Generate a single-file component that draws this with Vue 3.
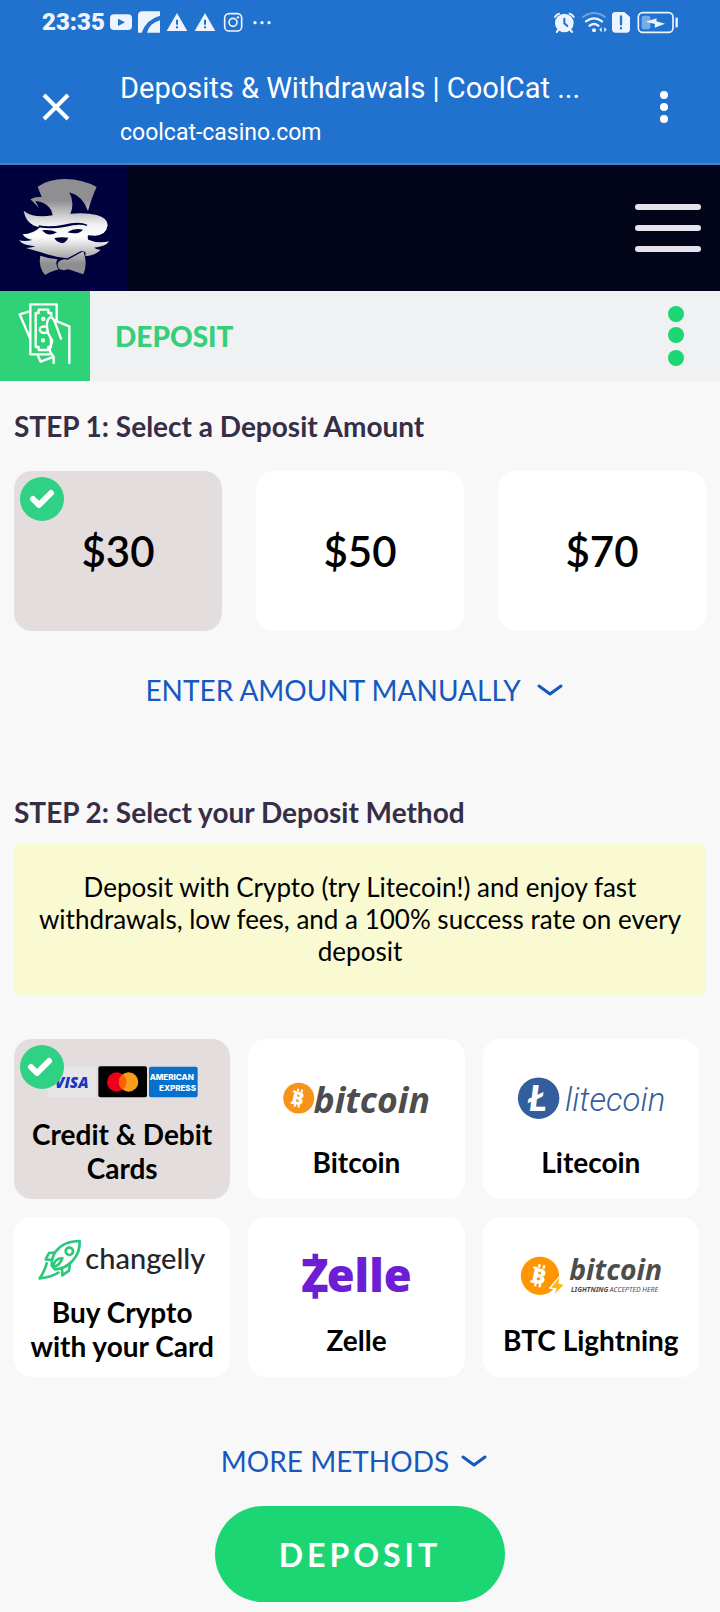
<script setup>
import { ref } from 'vue'

const amounts = [30, 50, 70]
const amount = ref(30)

const methods = [
  { id: 'cards', label: 'Credit & Debit Cards' },
  { id: 'bitcoin', label: 'Bitcoin' },
  { id: 'litecoin', label: 'Litecoin' },
  { id: 'changelly', label: 'Buy Crypto with your Card' },
  { id: 'zelle', label: 'Zelle' },
  { id: 'lightning', label: 'BTC Lightning' },
]
const method = ref('cards')
</script>

<template>
  <div class="page">
    <header class="browser">
      <div class="status">
        <div class="status-side">
          <span class="clock">23:35</span>
          <svg class="status-left" viewBox="330 30 492 72" aria-hidden="true">
            <rect x="333" y="43" width="66" height="47" rx="12" fill="#eef4fd" />
            <path d="M357 56 L378 67 L357 78Z" fill="#2171ce" />
            <path d="M417 98 V46 Q417 34 430 34 H483 V47 Q442 58 428 98Z M483 61 V98 H444 Q451 70 483 61Z" fill="#eef4fd" />
            <g fill="#eef4fd">
              <path d="M534 39 L565 93 H503Z" />
              <path d="M618 39 L649 93 H587Z" />
            </g>
            <g fill="#2171ce">
              <path d="M531 59h6v15h-6zM531 79h6v6h-6zM615 59h6v15h-6zM615 79h6v6h-6z" />
            </g>
            <rect x="677" y="41" width="51" height="52" rx="13" fill="none" stroke="#eef4fd" stroke-width="5" />
            <circle cx="702" cy="67" r="12" fill="none" stroke="#eef4fd" stroke-width="5" />
            <circle cx="717" cy="52" r="3.5" fill="#eef4fd" />
            <g fill="#eef4fd">
              <circle cx="768" cy="68" r="5" /><circle cx="789" cy="68" r="5" /><circle cx="810" cy="68" r="5" />
            </g>
          </svg>
        </div>
        <svg class="status-right" viewBox="582 30 378 72" aria-hidden="true">
          <g stroke="#eef4fd" fill="none" stroke-linecap="round">
            <circle cx="616" cy="69" r="28" fill="#eef4fd" stroke="none" />
            <path d="M588 51 Q591 43 600 41 M632 41 Q641 43 644 51" stroke-width="6" />
            <path d="M598 90 L593 96 M634 90 L639 96" stroke-width="6" />
            <path d="M616 56 V70 L625 78" stroke="#2171ce" stroke-width="6" />
            <path d="M672 51 Q705 27 738 51" stroke="#6ba2e2" stroke-width="6" />
            <path d="M681 64 Q705 46 729 64" stroke-width="7" />
            <path d="M692 77 Q705 67 718 77" stroke-width="7" />
            <circle cx="705" cy="91" r="6" fill="#eef4fd" stroke="none" />
            <path d="M728 81 V97 L721 89Z M736 81 V97 L743 89Z" fill="#eef4fd" stroke="none" />
            <path d="M769 36 H796 L813 51 V87 Q813 98 802 98 H770 Q759 98 759 87 V46 Q759 36 769 36Z" fill="#eef4fd" stroke="none" />
            <path d="M786 49 V73 M786 84 V85" stroke="#2171ce" stroke-width="7" />
            <rect x="838" y="38" width="104" height="59" rx="13" stroke-width="5" />
            <rect x="848" y="47" width="26" height="41" rx="6" fill="#79abe6" stroke="none" />
            <path d="M860 65 L893 55 L892 64 L918 71 L887 83 L888 72Z" fill="#eef4fd" stroke="none" />
            <path d="M953 53 V82" stroke-width="7" stroke-linecap="butt" />
          </g>
        </svg>
      </div>
      <div class="toolbar">
        <button class="icon-btn close" type="button" aria-label="Close">
          <svg width="28" height="28" viewBox="0 0 28 28"><path d="M2 2 L26 26 M26 2 L2 26" stroke="#fff" stroke-width="4" fill="none" /></svg>
        </button>
        <div class="titles">
          <div class="title">Deposits &amp; Withdrawals | CoolCat ...</div>
          <div class="host">coolcat-casino.com</div>
        </div>
        <button class="icon-btn more" type="button" aria-label="More options">
          <svg width="8" height="32" viewBox="0 0 8 32" fill="#fff"><circle cx="4" cy="4" r="4" /><circle cx="4" cy="16" r="4" /><circle cx="4" cy="28" r="4" /></svg>
        </button>
      </div>
    </header>

    <nav class="site-nav">
      <a class="brand" href="#" aria-label="CoolCat Casino">
        <svg width="128" height="126" viewBox="0 15 384 378">
          <defs>
            <linearGradient id="silver" gradientUnits="userSpaceOnUse" x1="0" y1="57" x2="0" y2="345">
              <stop offset="0" stop-color="#8f8f91" />
              <stop offset=".22" stop-color="#8f8f91" />
              <stop offset=".48" stop-color="#f2f2f4" />
              <stop offset=".6" stop-color="#ffffff" />
              <stop offset=".88" stop-color="#8f8f91" />
              <stop offset="1" stop-color="#8f8f91" />
            </linearGradient>
          </defs>
          <g fill="url(#silver)">
            <path d="M113 80 Q145 57 195 57 Q250 58 290 81 Q276 110 264 153 Q248 108 208 97 Q225 130 211 161 Q260 157 290 165 Q322 173 323 196 Q319 225 286 227 L264 226 Q262 234 265 239 Q295 252 327 244 Q318 260 282 263 Q290 269 302 269 Q285 287 256 289 L257 278 Q250 268 236 277 L202 295 Q165 292 120 276 L78 264 Q94 264 106 259 Q70 257 57 241 Q75 246 97 240 Q74 235 68 223 Q100 222 120 202 Q78 194 71 152 Q98 175 158 166 Q152 128 106 123 L117 144 Q106 132 91 118 Q106 109 125 111Z" />
            <path d="M121 287 Q147 296 172 298 Q164 314 176 328 Q156 333 135 345 Q114 319 121 287Z" />
            <path d="M175 306 Q187 294 203 299 L250 274 Q264 312 250 343 L205 328 Q190 333 179 328 Q169 318 175 306Z" />
          </g>
          <g fill="#00023e">
            <path d="M116 196 Q150 203 190 194 Q239 182 262 194 L260 198 Q239 190 198 200 Q155 209 116 202Z" />
            <path d="M126 211 Q150 208 171 217 Q145 233 126 211Z M202 217 Q223 203 249 209 Q235 226 202 217Z M163 234 Q183 230 205 233 Q200 245 187 250 Q170 247 163 234Z" />
          </g>
        </svg>
      </a>
      <button class="icon-btn burger" type="button" aria-label="Menu"><i></i><i></i><i></i></button>
    </nav>

    <div class="section-bar">
      <div class="section-icon">
        <svg width="90" height="90" viewBox="0 393 270 270" fill="none" stroke="#fff" stroke-width="7" stroke-linejoin="round" stroke-linecap="round" aria-hidden="true">
          <path d="M170 480 V433 H91 V583 H149" />
          <path d="M89 454 L59 463 L90 535 M114 587 L122 605 L156 592" />
          <path d="M154 469 V459 H145 V449 H116 V459 H107 V561 H116 V570 H145 V561 H153 V536" />
          <circle cx="130" cy="477" r="4" stroke-width="5" /><circle cx="129" cy="541" r="4" stroke-width="5" />
          <path d="M139 500 Q120 497 119 510 Q122 522 142 517" />
          <path d="M144 519 L157 543 L150 562 V575 L161 591 V609" />
          <path d="M144 519 Q135 481 151 472 Q158 471 163 482 L183 536 M164 481 L208 499 V609" />
        </svg>
      </div>
      <h1>DEPOSIT</h1>
      <button class="icon-btn dots" type="button" aria-label="Cashier menu">
        <svg width="16" height="60" viewBox="0 0 16 60" fill="#1bd672"><circle cx="8" cy="8" r="8" /><circle cx="8" cy="29" r="8" /><circle cx="8" cy="52" r="8" /></svg>
      </button>
    </div>

    <main>
      <h2 id="step-amount">STEP 1: Select a Deposit Amount</h2>
      <div class="amounts" role="radiogroup" aria-labelledby="step-amount">
        <label v-for="a in amounts" :key="a" class="card amount" :class="{ selected: amount === a }">
          <input v-model="amount" type="radio" name="amount" :value="a" />
          <svg v-if="amount === a" class="badge" viewBox="0 0 44 44" aria-hidden="true">
            <circle cx="22" cy="22" r="22" fill="#2fd285" /><path d="M13 22 L19 28 L31 16" fill="none" stroke="#fff" stroke-width="6" stroke-linecap="round" stroke-linejoin="round" />
          </svg>
          <span>${{ a }}</span>
        </label>
      </div>
      <button class="expand manual" type="button">
        ENTER AMOUNT MANUALLY
        <svg width="26" height="12" viewBox="0 0 26 12"><path d="M2 2 L13 10 L24 2" /></svg>
      </button>

      <h2 id="step-method">STEP 2: Select your Deposit Method</h2>
      <p class="notice">Deposit with Crypto (try Litecoin!) and enjoy fast withdrawals, low fees, and a 100% success rate on every deposit</p>

      <div class="methods" role="radiogroup" aria-labelledby="step-method">
        <label v-for="m in methods" :key="m.id" class="card method" :class="{ selected: method === m.id }">
          <input v-model="method" type="radio" name="method" :value="m.id" />
          <svg v-if="method === m.id" class="badge" viewBox="0 0 44 44" aria-hidden="true">
            <circle cx="22" cy="22" r="22" fill="#2fd285" /><path d="M11 22 L17 28 L29 16" fill="none" stroke="#fff" stroke-width="6" stroke-linecap="round" stroke-linejoin="round" />
          </svg>

          <svg v-if="m.id === 'cards'" class="art short" viewBox="42 75 648 162" aria-hidden="true">
            <rect x="143" y="110" width="145" height="92" rx="6" fill="#e6e6e8" />
            <text x="165" y="174" class="visa">VISA</text>
            <rect x="295" y="109" width="146" height="93" rx="6" fill="#000" />
            <circle cx="350" cy="156" r="29" fill="#eb001b" /><circle cx="386" cy="156" r="29" fill="#f79e1b" />
            <path d="M368 133 A29 29 0 0 1 368 179 A29 29 0 0 1 368 133Z" fill="#ff5f00" />
            <rect x="447" y="110" width="146" height="92" rx="6" fill="#0670cf" />
            <text x="449" y="151" class="amex">AMERICAN</text>
            <text x="477" y="182" class="amex">EXPRESS</text>
          </svg>

          <svg v-else-if="m.id === 'bitcoin'" class="art" viewBox="27 75 648 249" aria-hidden="true">
            <circle cx="177" cy="206" r="47" fill="#f7931a" />
            <g transform="rotate(12 176 206)">
              <text x="157" y="226" class="coin">B</text>
              <path d="M170 178 V187 M182 178 V187 M170 225 V234 M182 225 V234 M156 189 H166 M156 224 H166" stroke="#fff" stroke-width="6" />
            </g>
            <text x="222" y="251" class="btc">bitcoin</text>
          </svg>

          <svg v-else-if="m.id === 'litecoin'" class="art" viewBox="39 75 648 249" aria-hidden="true">
            <circle cx="204" cy="206" r="63" fill="#345d9d" />
            <text x="172" y="245" class="ltc-coin">Ł</text>
            <text x="284" y="244" class="ltc">litecoin</text>
          </svg>

          <svg v-else-if="m.id === 'changelly'" class="art short" viewBox="42 69 648 162" aria-hidden="true">
            <g fill="none" stroke="#2bc87b" stroke-width="8" stroke-linejoin="round">
              <path d="M239 93 Q190 93 166 126 Q155 142 155 166 L165 178 Q195 177 217 153 Q241 128 239 93Z" />
              <circle cx="208" cy="124" r="11" />
              <path d="M165 128 L147 129 L137 148 L155 150 M210 160 L207 182 L187 196 L186 175" />
              <path d="M141 157 Q136 180 119 205 Q155 202 178 186" />
              <path d="M187 144 Q161 147 160 171 Q180 167 187 144Z" />
            </g>
            <text x="256" y="178" class="changelly">changelly</text>
          </svg>

          <svg v-else-if="m.id === 'zelle'" class="art" viewBox="27 69 648 249" aria-hidden="true">
            <path d="M219 132h17v24h-17zM219 244h17v25h-17z" fill="#6d1ed4" />
            <text x="184" y="248" class="zelle">Z</text>
            <text x="262" y="248" class="zelle">elle</text>
          </svg>

          <svg v-else class="art" viewBox="39 69 648 249" aria-hidden="true">
            <circle cx="208" cy="199" r="58" fill="#ff9500" />
            <g transform="rotate(12 208 199)">
              <text x="184" y="223" class="coin large">B</text>
              <path d="M200 165 V176 M214 165 V176 M200 222 V233 M214 222 V233 M183 178 H195 M183 221 H195" stroke="#fff" stroke-width="7" />
            </g>
            <path d="M271 197 L238 236 L256 239 L248 262 L283 226 L266 221Z" fill="#ffb514" stroke="#fff" stroke-width="4" />
            <text x="297" y="213" class="btc small">bitcoin</text>
            <text x="302" y="247" class="tag strong">LIGHTNING</text>
            <text x="420" y="247" class="tag">ACCEPTED HERE</text>
          </svg>

          <span class="name">{{ m.label }}</span>
        </label>
      </div>

      <button class="expand methods-more" type="button">
        MORE METHODS
        <svg width="26" height="12" viewBox="0 0 26 12"><path d="M2 2 L13 10 L24 2" /></svg>
      </button>
      <button class="submit" type="button">DEPOSIT</button>
    </main>
  </div>
</template>

<style>
body {
  background: #f8f8f8;
}
</style>

<style scoped>
* {
  box-sizing: border-box;
}
.page {
  font-family: Lato, "Liberation Sans", sans-serif;
  color: #000;
  background: #f8f8f8;
}
button {
  font-family: inherit;
  border: 0;
  background: none;
  padding: 0;
  cursor: pointer;
}
svg {
  display: block;
  flex: none;
}
.icon-btn {
  display: flex;
  flex: none;
  align-items: center;
  justify-content: center;
}

.browser {
  background: #2171ce;
  border-bottom: 2px solid #4a80c6;
  color: #fff;
  font-family: Roboto, "Liberation Sans", sans-serif;
  padding-bottom: 16px;
}
.status {
  display: flex;
  align-items: center;
  justify-content: space-between;
  height: 44px;
  padding: 0 41px 0 42px;
}
.status-side {
  display: flex;
  align-items: center;
  gap: 4px;
}
.clock {
  font-size: 24px;
  line-height: 28px;
  font-weight: 900;
  color: #eef4fd;
}
.status-left {
  width: 164px;
  height: 24px;
}
.status-right {
  width: 126px;
  height: 24px;
}
.toolbar {
  display: flex;
  align-items: center;
  padding: 23px 52px 0 42px;
}
.titles {
  flex: 1;
  min-width: 0;
  margin-left: 50px;
}
.title {
  font-size: 29px;
  line-height: 42px;
  white-space: nowrap;
}
.host {
  margin-top: 10px;
  font-size: 23px;
  line-height: 28px;
}

.site-nav {
  display: flex;
  align-items: center;
  justify-content: space-between;
  padding-right: 19px;
  background: #02041a;
}
.brand {
  background: #00023e;
}
.burger {
  flex-direction: column;
  gap: 15px;
}
.burger i {
  width: 66px;
  height: 6px;
  border-radius: 3px;
  background: #e6e4ea;
}

.section-bar {
  display: flex;
  align-items: center;
  padding-right: 36px;
  background: #f0f1f3;
}
.section-icon {
  background: #2fd276;
}
h1 {
  flex: 1;
  margin: 0 0 0 25px;
  font-size: 28px;
  line-height: 36px;
  font-weight: 900;
  color: #35cf79;
}

main {
  display: flex;
  flex-direction: column;
  padding: 28px 14px 10px;
}
h2 {
  margin: 0;
  font-size: 28px;
  line-height: 34px;
  font-weight: 700;
  color: #352e46;
}
.card {
  position: relative;
  display: flex;
  min-height: 160px;
  border-radius: 18px;
  background: #fff;
  cursor: pointer;
}
.card.selected {
  background: #e3dddd;
}
.card input {
  position: absolute;
  inset: 0;
  width: 100%;
  height: 100%;
  margin: 0;
  opacity: 0;
}
.badge {
  position: absolute;
  top: 6px;
  left: 6px;
  z-index: 1;
  width: 44px;
  height: 44px;
}
.amounts {
  display: grid;
  grid-template-columns: repeat(3, 1fr);
  gap: 34px;
  margin-top: 28px;
}
.amount {
  align-items: center;
  justify-content: center;
  font-size: 42px;
  font-weight: 600;
}
.expand {
  display: flex;
  align-items: center;
  align-self: center;
  font-size: 28px;
  line-height: 36px;
  color: #1558c0;
}
.expand path {
  fill: none;
  stroke: #1558c0;
  stroke-width: 3;
  stroke-linecap: round;
  stroke-linejoin: round;
}
.manual {
  gap: 16px;
  margin: 41px 12px 87px 0;
}
.methods-more {
  gap: 12px;
  margin: 66px 12px 27px 0;
}
.notice {
  margin: 14px 0 0;
  padding: 28px 24px;
  border-radius: 6px;
  background: #f9f9d2;
  font-size: 26px;
  line-height: 32px;
  text-align: center;
}
.methods {
  display: grid;
  grid-template-columns: repeat(3, 1fr);
  gap: 18px;
  margin: 44px 7px 0 0;
}
.method {
  flex-direction: column;
  align-items: center;
  gap: 8px;
  padding-top: 16px;
}
.art {
  width: 216px;
  height: 82px;
}
.art.short {
  height: 54px;
}
.name {
  padding: 0 12px;
  font-size: 28px;
  line-height: 34px;
  font-weight: 700;
  text-align: center;
}
.submit {
  align-self: center;
  width: 290px;
  height: 96px;
  border-radius: 48px;
  background: #1bd672;
  color: #fff;
  font-size: 32px;
  font-weight: 700;
  letter-spacing: 4px;
}

.visa {
  font: italic 800 46px "Open Sans", sans-serif;
  fill: #1a35c0;
}
.amex {
  font: 800 24px Inter, sans-serif;
  fill: #fff;
}
.coin {
  font: 800 54px "Open Sans", sans-serif;
  fill: #fff;
}
.coin.large {
  font-size: 64px;
}
.btc {
  font: italic 700 108px "Noto Sans", sans-serif;
  fill: #4d4d4d;
}
.btc.small {
  font-size: 86px;
}
.tag {
  font: italic 400 21px "Noto Sans", sans-serif;
  fill: #4d4d4d;
}
.tag.strong {
  font-weight: 700;
}
.ltc-coin {
  font: italic 900 112px Lato, sans-serif;
  fill: #fff;
}
.ltc {
  font: italic 300 100px Roboto, sans-serif;
  fill: #345d9d;
}
.changelly {
  font: 500 87px Lato, sans-serif;
  fill: #23242c;
}
.zelle {
  font: 800 137px "Open Sans", sans-serif;
  fill: #6d1ed4;
}
</style>
